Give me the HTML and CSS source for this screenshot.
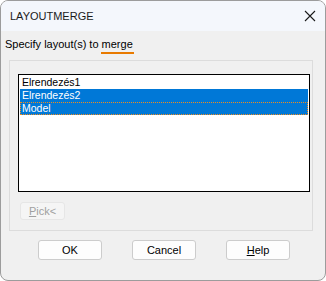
FILE: index.html
```html
<!DOCTYPE html>
<html lang="en">
<head>
    <meta charset="UTF-8">
    <title>LAYOUTMERGE</title>
    <link rel="stylesheet" href="styles.css">
</head>
<body>
    <div class="window">
        <div class="titlebar">
            <span class="title">LAYOUTMERGE</span>
            <svg class="close" width="12" height="12" viewBox="0 0 12 12">
                <path d="M1 1 L11 11 M11 1 L1 11" stroke="#1a1a1a" stroke-width="1.1" fill="none"/>
            </svg>
        </div>
        <div class="content">
            <p class="prompt">Specify layout(s) to <span class="hint">merge</span></p>
            <div class="group">
                <ul class="listbox">
                    <li>Elrendezés1</li>
                    <li class="selected">Elrendezés2</li>
                    <li class="selected focused">Model</li>
                </ul>
                <button class="pick" disabled><u>P</u>ick&lt;</button>
            </div>
            <div class="actions">
                <button class="btn">OK</button>
                <button class="btn">Cancel</button>
                <button class="btn"><u>H</u>elp</button>
            </div>
        </div>
    </div>
</body>
</html>
```

FILE: styles.css
```css
body {
    margin: 0;
    font-family: 'Liberation Sans', Arial, sans-serif;
    font-size: 11px;
    color: #000;
    background: #fff;
}
.window {
    width: 326px;
    height: 281px;
    box-sizing: border-box;
    border: 1px solid #9c9c9c;
    border-radius: 8px;
    background: #f0f0f0;
    overflow: hidden;
}
.titlebar {
    height: 30px;
    background: #f4f7fc;
    display: flex;
    align-items: center;
    justify-content: space-between;
    padding: 0 9px 0 9px;
}
.title {
    font-size: 11px;
    color: #1a1a1a;
}
.prompt {
    margin: 0;
    padding: 7px 4px 0;
    height: 22px;
    box-sizing: border-box;
    line-height: 13px;
}
.hint {
    border-bottom: 2px solid #e87a00;
    padding: 0 1px 2px;
    margin: 0 -1px;
}
.group {
    margin: 7px 12px 0 8px;
    border: 1px solid #dcdcdc;
    padding: 13px 2px 10px 8px;
}
.listbox {
    list-style: none;
    margin: 0;
    padding: 1px;
    height: 118px;
    box-sizing: border-box;
    border: 1px solid #000;
    background: #fff;
}
.listbox li {
    height: 13px;
    line-height: 13px;
    padding-left: 2px;
    font-size: 10.5px;
}
.listbox .selected {
    background: #0078d7;
    color: #fff;
}
.listbox .focused {
    outline: 1px dotted #f08c1c;
    outline-offset: -1px;
}
.pick {
    display: block;
    margin-top: 10px;
    margin-left: 2px;
    width: 45px;
    height: 18px;
    padding: 0;
    font-family: inherit;
    font-size: 11px;
    color: #a0a0a0;
    background: #f5f5f5;
    border: 1px solid #e6e6e6;
    border-radius: 3px;
}
.actions {
    display: flex;
    gap: 30px;
    padding: 9px 0 0 37px;
}
.btn {
    width: 64px;
    height: 20px;
    padding: 0;
    font-family: inherit;
    font-size: 11px;
    color: #000;
    background: #fdfdfd;
    border: 1px solid #cccccc;
    border-radius: 3px;
}
```
